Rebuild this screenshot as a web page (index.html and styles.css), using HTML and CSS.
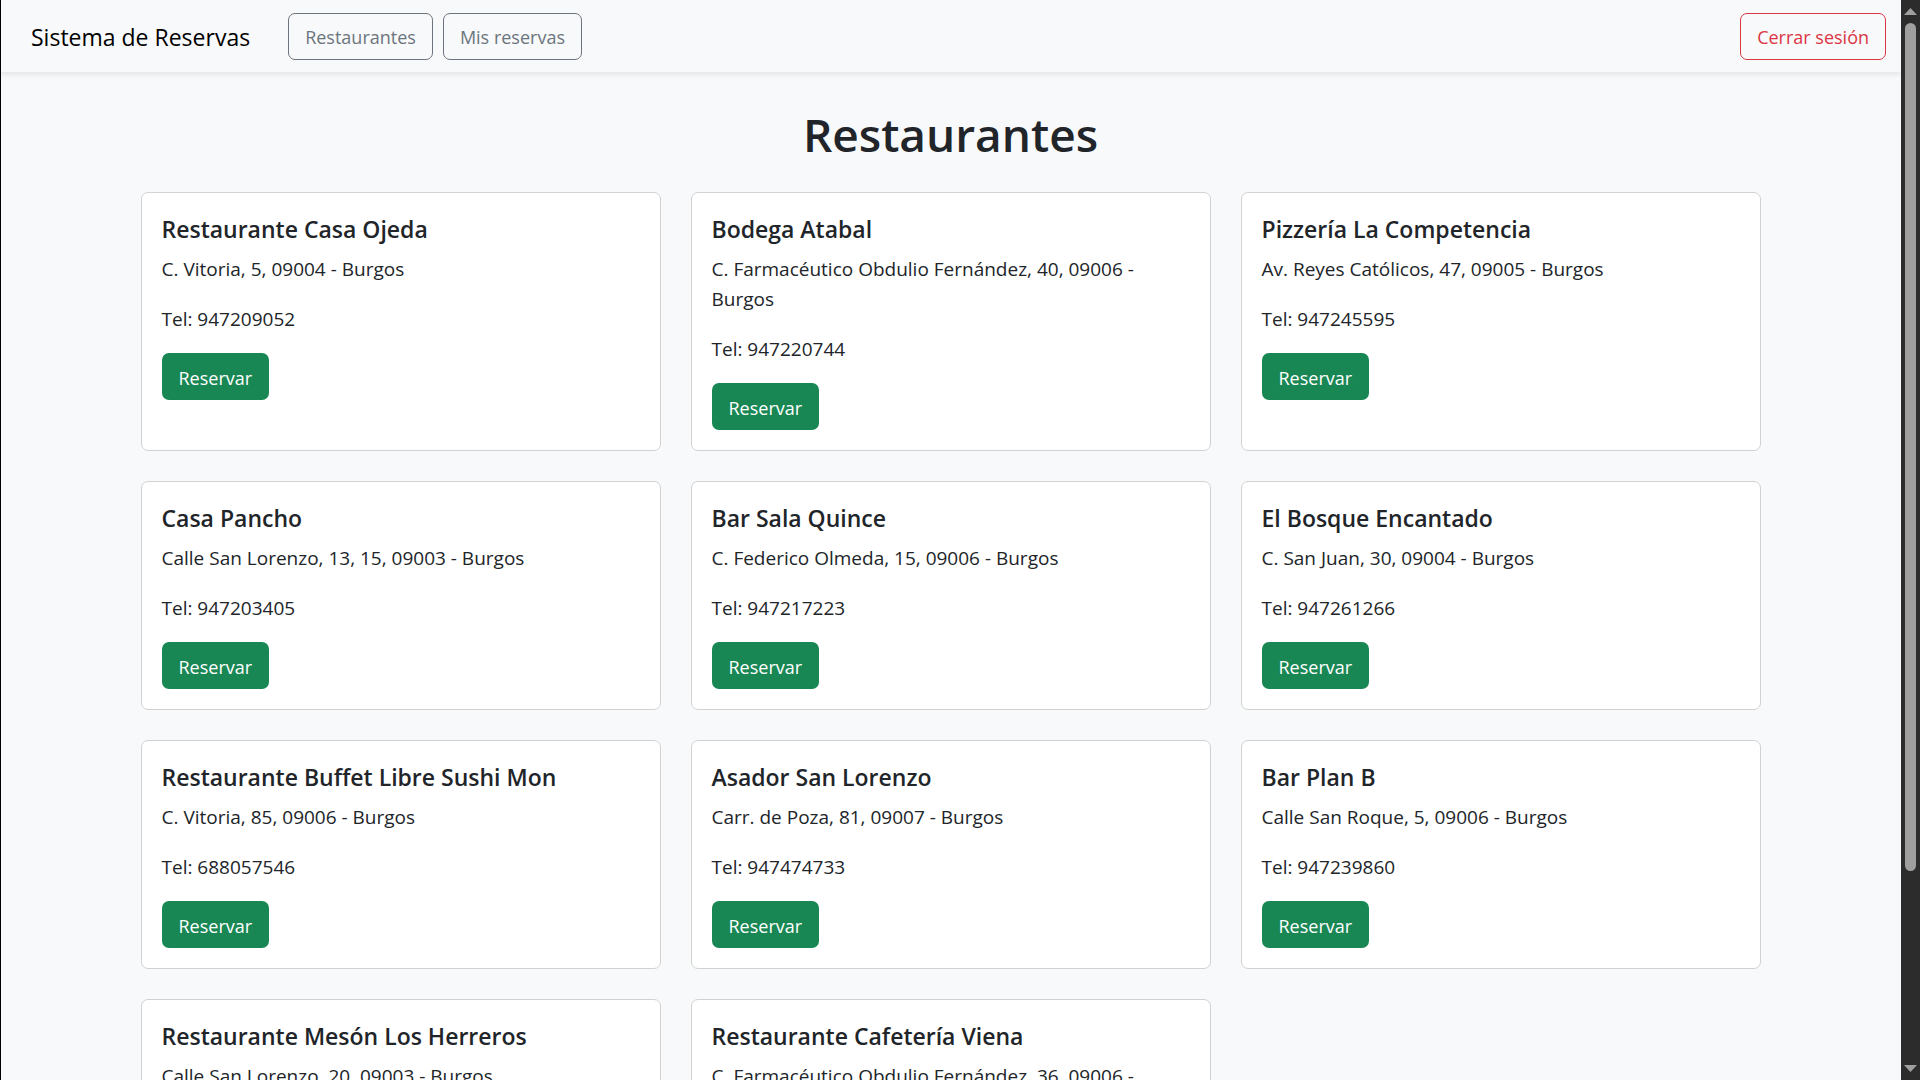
FILE: index.html
```html
<!DOCTYPE html>
<html lang="es">
<head>
<meta charset="utf-8">
<meta name="viewport" content="width=device-width, initial-scale=1">
<title>Sistema de Reservas</title>
<link rel="stylesheet" href="styles.css">
</head>
<body>
<div class="content">
  <nav class="navbar">
    <a class="brand" href="#">Sistema de Reservas</a>
    <div class="nav-links">
      <a class="btn btn-secondary" href="#">Restaurantes</a>
      <a class="btn btn-secondary" href="#">Mis reservas</a>
    </div>
    <button class="btn btn-danger logout" type="button">Cerrar sesión</button>
  </nav>
  <main class="container">
    <h1 class="page-title">Restaurantes</h1>
    <div class="grid">
      <article class="card">
        <h2 class="card-title">Restaurante Casa Ojeda</h2>
        <p class="card-text">C. Vitoria, 5, 09004 - Burgos</p>
        <p class="card-text">Tel: 947209052</p>
        <a class="btn btn-success" href="#">Reservar</a>
      </article>
      <article class="card">
        <h2 class="card-title">Bodega Atabal</h2>
        <p class="card-text">C. Farmacéutico Obdulio Fernández, 40, 09006 - Burgos</p>
        <p class="card-text">Tel: 947220744</p>
        <a class="btn btn-success" href="#">Reservar</a>
      </article>
      <article class="card">
        <h2 class="card-title">Pizzería La Competencia</h2>
        <p class="card-text">Av. Reyes Católicos, 47, 09005 - Burgos</p>
        <p class="card-text">Tel: 947245595</p>
        <a class="btn btn-success" href="#">Reservar</a>
      </article>
      <article class="card">
        <h2 class="card-title">Casa Pancho</h2>
        <p class="card-text">Calle San Lorenzo, 13, 15, 09003 - Burgos</p>
        <p class="card-text">Tel: 947203405</p>
        <a class="btn btn-success" href="#">Reservar</a>
      </article>
      <article class="card">
        <h2 class="card-title">Bar Sala Quince</h2>
        <p class="card-text">C. Federico Olmeda, 15, 09006 - Burgos</p>
        <p class="card-text">Tel: 947217223</p>
        <a class="btn btn-success" href="#">Reservar</a>
      </article>
      <article class="card">
        <h2 class="card-title">El Bosque Encantado</h2>
        <p class="card-text">C. San Juan, 30, 09004 - Burgos</p>
        <p class="card-text">Tel: 947261266</p>
        <a class="btn btn-success" href="#">Reservar</a>
      </article>
      <article class="card">
        <h2 class="card-title">Restaurante Buffet Libre Sushi Mon</h2>
        <p class="card-text">C. Vitoria, 85, 09006 - Burgos</p>
        <p class="card-text">Tel: 688057546</p>
        <a class="btn btn-success" href="#">Reservar</a>
      </article>
      <article class="card">
        <h2 class="card-title">Asador San Lorenzo</h2>
        <p class="card-text">Carr. de Poza, 81, 09007 - Burgos</p>
        <p class="card-text">Tel: 947474733</p>
        <a class="btn btn-success" href="#">Reservar</a>
      </article>
      <article class="card">
        <h2 class="card-title">Bar Plan B</h2>
        <p class="card-text">Calle San Roque, 5, 09006 - Burgos</p>
        <p class="card-text">Tel: 947239860</p>
        <a class="btn btn-success" href="#">Reservar</a>
      </article>
      <article class="card">
        <h2 class="card-title">Restaurante Mesón Los Herreros</h2>
        <p class="card-text">Calle San Lorenzo, 20, 09003 - Burgos</p>
      </article>
      <article class="card">
        <h2 class="card-title">Restaurante Cafetería Viena</h2>
        <p class="card-text">C. Farmacéutico Obdulio Fernández, 36, 09006 - Burgos</p>
      </article>
    </div>
  </main>
</div>
<div class="scrollbar" aria-hidden="true">
  <svg class="arrow" viewBox="0 0 13 7"><path d="M6.500 0 13 7H0z"/></svg>
  <div class="track"><div class="thumb"></div></div>
  <svg class="arrow" viewBox="0 0 13 7"><path d="M0 0h13L6.500 7z"/></svg>
</div>
</body>
</html>
```
FILE: styles.css
```css
* {
  box-sizing: border-box;
}

body {
  display: flex;
  height: 100vh;
  margin: 0;
  overflow: hidden;
  background: #f8f9fa;
  color: #212529;
  font-family: "Segoe UI", "Open Sans", "Noto Sans", sans-serif;
  font-size: 19px;
  line-height: 30px;
}

.content {
  flex: 1;
  min-width: 0;
  overflow-y: auto;
  scrollbar-width: none;
  box-shadow: inset 1px 0 #000;
}

.navbar {
  display: flex;
  align-items: center;
  padding: 13px 15px 12px 31px;
  box-shadow: 0 3px 5px rgba(0, 0, 0, 0.075);
}

.brand {
  margin-right: 38px;
  color: #000;
  font-size: 23px;
  text-decoration: none;
}

.nav-links {
  display: flex;
  gap: 10px;
}

.logout {
  margin-left: auto;
}

.btn {
  display: inline-flex;
  align-items: center;
  justify-content: center;
  min-height: 47px;
  padding: 0 16px;
  border: 1px solid transparent;
  border-radius: 7px;
  background: none;
  font: inherit;
  font-size: 18px;
  text-decoration: none;
  cursor: pointer;
}

.btn-secondary {
  border-color: #6c757d;
  color: #6c757d;
}

.btn-danger {
  border-color: #dc3545;
  color: #dc3545;
}

.btn-success {
  padding-top: 2px;
  background: #198754;
  color: #fff;
}

.container {
  max-width: 1650px;
  margin: 0 auto;
  padding: 30px 15px;
}

.page-title {
  margin: 0 0 26px;
  font-size: 46px;
  font-weight: 600;
  line-height: 64px;
  text-align: center;
}

.grid {
  display: grid;
  grid-template-columns: repeat(auto-fill, minmax(400px, 1fr));
  gap: 30px;
}

.card {
  padding: 20px;
  border: 1px solid #d2d2d2;
  border-radius: 7px;
  background: #fff;
}

.card-title {
  margin: 0 0 9px;
  font-size: 23px;
  font-weight: 600;
  line-height: 32px;
}

.card-text {
  margin: 0 0 20px;
}

.card-text:last-of-type {
  margin-bottom: 19px;
}

.scrollbar {
  display: flex;
  flex-direction: column;
  align-items: center;
  gap: 8px;
  width: 19px;
  padding: 8px 0;
  background: #2c2c2c;
}

.arrow {
  width: 13px;
  height: 7px;
  fill: #9f9f9f;
}

.track {
  flex: 1;
}

.thumb {
  width: 11px;
  height: 82%;
  border-radius: 6px;
  background: #9f9f9f;
}
```
